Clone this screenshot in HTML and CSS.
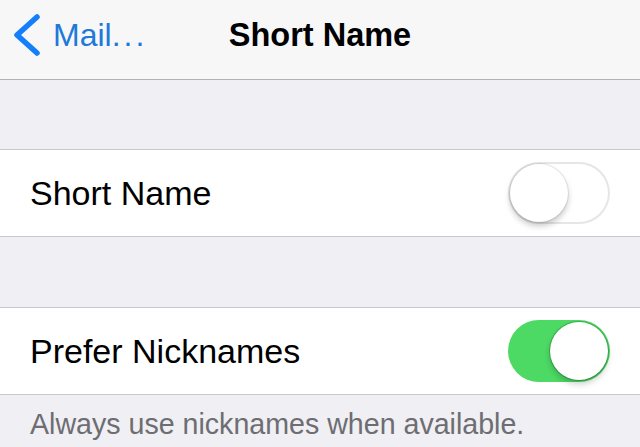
FILE: index.html
```html
<!DOCTYPE html>
<html lang="en">

<head>
    <meta charset="UTF-8">
    <meta name="viewport" content="width=device-width, initial-scale=1.0">
    <title>Short Name</title>
    <link rel="stylesheet" href="styles.css">
</head>

<body>
    <header class="navbar">
        <a class="back" href="#">
            <svg class="chevron" width="28" height="42" viewBox="0 0 28 42">
                <path d="M25 3 L5 21 L25 39" fill="none" stroke="#157efb" stroke-width="5.5" stroke-linecap="round" stroke-linejoin="round" />
            </svg>
            <span>Mail<span class="dots">...</span></span>
        </a>
        <h1 class="title">Short Name</h1>
        <div></div>
    </header>

    <div class="spacer"></div>

    <div class="group">
        <div class="cell">
            <span class="label">Short Name</span>
            <div class="switch"><div class="knob"></div></div>
        </div>
    </div>

    <div class="spacer second"></div>

    <div class="group">
        <div class="cell">
            <span class="label">Prefer Nicknames</span>
            <div class="switch on"><div class="knob"></div></div>
        </div>
    </div>

    <p class="footer">Always use nicknames when available.</p>
</body>

</html>
```

FILE: styles.css
```css
body {
    font-family: "Liberation Sans", Arial, sans-serif;
    background-color: #efeff4;
    margin: 0;
}

.navbar {
    height: 80px;
    box-sizing: border-box;
    padding-bottom: 9px;
    display: grid;
    grid-template-columns: 1fr auto 1fr;
    align-items: center;
    background-color: #f7f7f8;
    border-bottom: 1px solid #b2b2b4;
}

.back {
    display: flex;
    align-items: center;
    gap: 13px;
    padding-left: 12px;
    color: #2079d9;
    font-size: 32px;
    text-decoration: none;
}

.back .dots {
    letter-spacing: 3px;
}

.chevron {
    display: block;
}

.title {
    margin: 0;
    font-size: 32.5px;
    font-weight: bold;
    color: #000;
}

.spacer {
    height: 69px;
}

.spacer.second {
    height: 70px;
}

.group {
    background-color: #ffffff;
    border-top: 1px solid #c8c7cc;
    border-bottom: 1px solid #c8c7cc;
}

.cell {
    height: 86px;
    display: flex;
    align-items: center;
    justify-content: space-between;
    padding: 0 30px 0 30px;
}

.label {
    font-size: 34px;
    color: #000;
}

.switch {
    width: 102px;
    height: 62px;
    box-sizing: border-box;
    padding: 2px;
    border-radius: 31px;
    display: flex;
    align-items: center;
    background-color: #ffffff;
    box-shadow: inset 0 0 0 2px #e5e5ea;
}

.switch.on {
    justify-content: flex-end;
    background-color: #4cd964;
    box-shadow: none;
}

.knob {
    width: 58px;
    height: 58px;
    border-radius: 50%;
    background-color: #ffffff;
    box-shadow: 0 4px 6px rgba(0, 0, 0, 0.22), 0 0 0 1px rgba(0, 0, 0, 0.08);
}

.switch.on .knob {
    box-shadow: 0 4px 6px rgba(0, 0, 0, 0.2), 0 0 0 1px rgba(40, 140, 60, 0.5);
}

.footer {
    margin: 0;
    padding: 13px 30px 0 30px;
    font-size: 28.6px;
    line-height: 32px;
    color: #6d6d72;
}
```
